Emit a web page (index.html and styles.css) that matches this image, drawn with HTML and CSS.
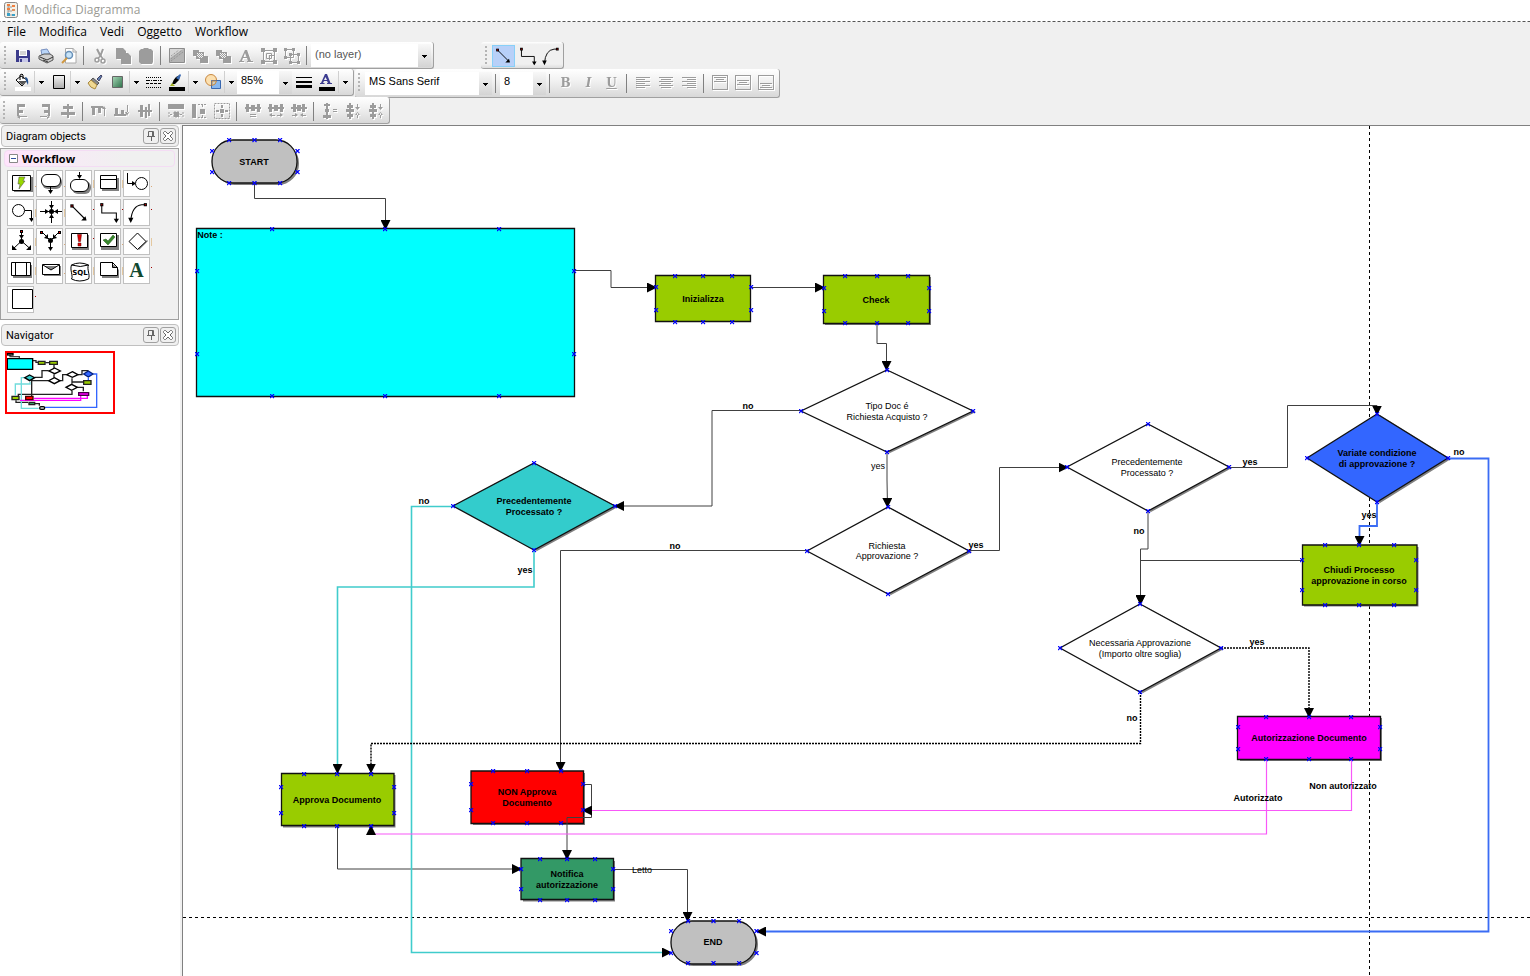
FILE: index.html
```html
<!DOCTYPE html>
<html lang="it">
<head>
<meta charset="utf-8">
<title>Modifica Diagramma</title>
<link rel="stylesheet" href="styles.css">
</head>
<body>
<svg class="defs" aria-hidden="true">
  <defs>
    <symbol id="i-caret" viewBox="0 0 5 3"><path d="M0 0h5v1h-1v1h-1v1h-1v-1h-1v-1h-1z"/></symbol>
    <symbol id="i-scissors" viewBox="0 0 16 16"><path d="M5 1l3.500 7M11 1L8 9" stroke="#9c9c9c" stroke-width="2" fill="none"/><circle cx="5" cy="12" r="2" fill="none" stroke="#9c9c9c" stroke-width="1.500"/><circle cx="11" cy="13" r="2" fill="none" stroke="#9c9c9c" stroke-width="1.500"/><path d="M6 10l3-2 2 3" stroke="#9c9c9c" stroke-width="1.500" fill="none"/></symbol>
    <symbol id="i-copy" viewBox="0 0 16 16"><path d="M1 0h7l3 3v2h2l3 3v8H6v-5H1z" fill="#9c9c9c"/></symbol>
    <symbol id="i-paste" viewBox="0 0 16 16"><path d="M3 1h2l1-1h4l1 1h2l2 2v11l-1 2H3l-2-2V3z" fill="#9c9c9c"/></symbol>
    <symbol id="i-back" viewBox="0 0 16 16"><path d="M1 2h6v2h5v4h4v7H8v-4H4V8H1z" fill="#9c9c9c"/><path d="M5 5h1v1H5zM7 5h1v1H7zM9 5h1v1H9zM6 6h1v1H6zM8 6h1v1H8zM10 6h1v1h-1zM5 7h1v1H5zM7 7h1v1H7zM9 7h1v1H9zM6 8h1v1H6zM8 8h1v1H8zM7 9h1v1H7zM9 9h1v1H9zM10 8h1v1h-1z" fill="#f4f4f4"/></symbol>
    <symbol id="i-pal-line" viewBox="0 0 24 24"><path d="M5 5L18 18" stroke="#000" fill="none"/><path d="M19 19h-5l4-4z"/><path d="M4 4h3v3H4z"/><path d="M5 5h1v1H5z" fill="red"/></symbol>
    <symbol id="i-pal-elbow" viewBox="0 0 24 24"><path d="M6.500 5v7.500h14V21" stroke="#000" fill="none"/><path d="M18 18h5l-2.500 4z"/><path d="M5 3h3v3H5z"/><path d="M6 4h1v1H6z" fill="red"/></symbol>
    <symbol id="i-pal-arc" viewBox="0 0 24 24"><path d="M20 4.500h-3Q7.500 5.500 6.500 20" stroke="#000" fill="none"/><path d="M4 17h5l-2.500 5z"/><path d="M19 3h3v3h-3z"/><path d="M20 4h1v1h-1z" fill="red"/></symbol>
    <marker id="pt" markerWidth="5" markerHeight="5" refX="2.500" refY="2.500" markerUnits="userSpaceOnUse"><path d="M.5.5l4 4M4.500.5l-4 4" stroke="#00f" stroke-width="1.200"/></marker>
    <marker id="arrow" markerWidth="10" markerHeight="10" refX="9" refY="5" orient="auto" markerUnits="userSpaceOnUse"><path d="M0 0l10 5-10 5z"/></marker>
  </defs>
</svg>

<header class="titlebar">
  <svg class="app-icon" viewBox="0 0 16 16"><rect x="1.500" y=".5" width="13" height="15" rx="2" fill="#f4f1e8" stroke="#888"/><path d="M5 3v10M5 5h4M5 9h4M5 13h4" stroke="#999" fill="none"/><path d="M4 2h3v2H4zM9 3h3v2H9zM4 6h3v2H4z" fill="#f08040"/><path d="M9 7h3v2H9z" fill="#e09060"/><path d="M4 11h3v3H4zM9 12h3v2H9z" fill="#3aa0c8"/></svg>
  <h1 class="title">Modifica Diagramma</h1>
</header>

<nav class="menubar">
  <button class="menu">File</button><button class="menu">Modifica</button><button class="menu">Vedi</button><button class="menu">Oggetto</button><button class="menu">Workflow</button>
</nav>

<div class="toolbars">
  <div class="row row-spaced">
    <div class="toolbar">
      <span class="grip"></span>
      <button class="tool" aria-label="Salva"><svg viewBox="0 0 16 16"><path d="M1 2h13l1 1v11H1z" fill="#3c3c8c"/><path d="M4 2h8v6H4z" fill="#fff"/><path d="M5 4h6M5 6h6" stroke="#aaa"/><path d="M4 10h9v4H4z" fill="#c8c8e8"/><path d="M5 11h2v3H5z" fill="#3c3c8c"/></svg></button>
      <button class="tool" aria-label="Stampa"><svg viewBox="0 0 16 16"><path d="M4 7L3 2l6-1 3 5z" fill="#b8d4f8" stroke="#7890c0"/><path d="M1 8l5-2h6l3 2v4l-6 3-8-4z" fill="#d0d0d0" stroke="#555"/><path d="M2 9l7 3 6-3M5 12l5 2" stroke="#333" fill="none"/></svg></button>
      <button class="tool" aria-label="Anteprima"><svg viewBox="0 0 16 16"><path d="M5 .5h7l3 3v11.500H4.500V.5z" fill="#fff" stroke="#aaa"/><path d="M12 0v4h4" fill="none" stroke="#aaa"/><circle cx="8" cy="7" r="3.500" fill="#c8e4f8" stroke="#6890b8" stroke-width="1.500"/><path d="M6 10l-5 5" stroke="#d09840" stroke-width="2"/></svg></button>
      <span class="sep"></span>
      <button class="tool off" aria-label="Taglia"><svg><use href="#i-scissors"/></svg></button>
      <button class="tool off" aria-label="Copia"><svg><use href="#i-copy"/></svg></button>
      <button class="tool off" aria-label="Incolla"><svg><use href="#i-paste"/></svg></button>
      <span class="sep"></span>
      <button class="tool off" aria-label="Immagine"><svg viewBox="0 0 16 16"><path d="M.5.5h15v14H.5z" fill="#b4b4b4" stroke="#8c8c8c"/><path d="M1 10L14 1H1z" fill="#d8d8d8"/><path d="M2 11L13 2M2 8l8-6M2 13L14 4" stroke="#8c8c8c" stroke-dasharray="1 1"/></svg></button>
      <button class="tool off" aria-label="Porta dietro"><svg><use href="#i-back"/></svg></button>
      <button class="tool off" aria-label="Porta davanti"><svg><use href="#i-back"/></svg></button>
      <button class="tool off" aria-label="Testo"><svg viewBox="0 0 16 16"><path d="M7 2h2l4 11h2v1H9v-1h1l-1-3H5l-1 3h2v1H1v-1h1zM7 5L5.500 9h3z" fill="#9c9c9c"/></svg></button>
      <button class="tool off" aria-label="Raggruppa"><svg viewBox="0 0 16 16"><path d="M2.500 2.500h11v11h-11zM5.500 5.500h5v5h-5z" fill="none" stroke="#9c9c9c"/><path d="M0 0h4v4H0zM12 0h4v4h-4zM0 12h4v4H0zM12 12h4v4h-4zM8 7h5v1H8zM8 8h1v4H8z" fill="#9c9c9c"/></svg></button>
      <button class="tool off" aria-label="Separa"><svg viewBox="0 0 16 16"><path d="M1.500 1.500h8v8h-8zM6.500 6.500h8v8h-8z" fill="none" stroke="#9c9c9c"/><path d="M0 0h3v3H0zM8 0h3v3H8zM0 8h3v3H0zM5 5h3v3H5zM13 5h3v3h-3zM5 13h3v3H5zM13 13h3v3h-3z" fill="#9c9c9c"/></svg></button>
      <span class="sep"></span>
      <span class="combo combo-layer"><select aria-label="Livello"><option>(no layer)</option></select><svg class="caret"><use href="#i-caret"/></svg></span>
    </div>
    <div class="toolbar toolbar-flat">
      <span class="grip"></span>
      <button class="tool on" aria-label="Linea"><svg class="big"><use href="#i-pal-line"/></svg></button>
      <button class="tool" aria-label="Linea spezzata"><svg class="big"><use href="#i-pal-elbow"/></svg></button>
      <button class="tool" aria-label="Curva"><svg class="big"><use href="#i-pal-arc"/></svg></button>
    </div>
  </div>

  <div class="row row-format">
    <div class="toolbar">
      <span class="grip"></span>
      <button class="tool" aria-label="Riempimento"><svg viewBox="0 0 16 16"><path d="M0 13h16v4H0z" fill="#fff"/><path d="M1 6l5-4 6 4-5 6z" fill="#fff" stroke="#000"/><path d="M3 7h8l-4 4z" fill="#555"/><path d="M5 6V1l2-1 1 1v4" stroke="#000" fill="none"/><path d="M10 3q4 0 3 8l-2-4z" fill="#24508c"/></svg></button>
      <button class="drop" aria-label="Opzioni riempimento"><svg class="caret"><use href="#i-caret"/></svg></button>
      <button class="tool" aria-label="Sfumatura"><svg viewBox="0 0 16 16"><linearGradient id="g1" x2="0" y2="1"><stop stop-color="#f4f4f4"/><stop offset="1" stop-color="#aaa"/></linearGradient><path d="M2.500 1.500h11v13h-11z" fill="url(#g1)" stroke="#000"/></svg></button>
      <button class="drop" aria-label="Opzioni sfumatura"><svg class="caret"><use href="#i-caret"/></svg></button>
      <button class="tool" aria-label="Copia formato"><svg viewBox="0 0 16 16"><path d="M10 5l4-4 1 1-3 5z" fill="#6080b0" stroke="#446"/><path d="M6 4l6 5-2 2-6-5z" fill="#888" stroke="#555"/><path d="M4 6l6 5-2 4q-5-1-7-6z" fill="#f0d890" stroke="#a88840"/></svg></button>
      <button class="tool" aria-label="Ombra"><svg viewBox="0 0 16 16"><linearGradient id="g2" x2="1" y2="1"><stop stop-color="#a8d8b8"/><stop offset="1" stop-color="#2c7048"/></linearGradient><path d="M2.500 2.500h10v11h-10z" fill="url(#g2)" stroke="#666"/></svg></button>
      <button class="drop" aria-label="Opzioni ombra"><svg class="caret"><use href="#i-caret"/></svg></button>
      <button class="tool" aria-label="Stile linea"><svg viewBox="0 0 16 16" class="crisp"><path d="M0 3.500h16M0 13.500h16" stroke="#000" stroke-dasharray="1 1"/><path d="M0 6.500h16" stroke="#000" stroke-dasharray="4 1 1 1"/><path d="M0 9.500h16" stroke="#000" stroke-dasharray="3 1"/></svg></button>
      <button class="tool" aria-label="Colore linea"><svg viewBox="0 0 16 16"><path d="M0 13h16v4H0z"/><path d="M3 10q1-4 4-7l4-2-1 5-4 4z" fill="#000"/><path d="M7 4l4-4 1 1-2 5z" fill="#3868b0"/><path d="M1 12h5l-3-3z" fill="#a0b020"/></svg></button>
      <button class="drop" aria-label="Opzioni linea"><svg class="caret"><use href="#i-caret"/></svg></button>
      <button class="tool" aria-label="Forme"><svg viewBox="0 0 16 16"><circle cx="6" cy="6" r="5.500" fill="#fce0b0" stroke="#c88840"/><path d="M6.500 6.500h9v8h-9z" fill="#88b8f0" stroke="#3868b0"/><path d="M7 7h4.500a5.500 5.500 0 0 1-4.500 4.500z" fill="#c8d0c8" stroke="#c88840"/></svg></button>
      <button class="drop" aria-label="Opzioni forme"><svg class="caret"><use href="#i-caret"/></svg></button>
      <span class="combo combo-zoom"><select aria-label="Zoom"><option>85%</option></select><svg class="caret"><use href="#i-caret"/></svg></span>
      <button class="tool" aria-label="Spessore"><svg viewBox="0 0 16 16"><path d="M0 3h16v1H0zM0 7h16v2H0zM0 11h16v3H0z"/></svg></button>
      <button class="tool" aria-label="Colore testo"><svg viewBox="0 0 16 16"><path d="M6 0h2l3.500 9H13v1H8V9h1L8 7H5L4 9h1.500v1H1V9h1zM6.500 3L5 6h3z" fill="#3c3c90"/><path d="M0 13h16v4H0z"/></svg></button>
      <button class="drop" aria-label="Opzioni testo"><svg class="caret"><use href="#i-caret"/></svg></button>
    </div>
    <div class="toolbar toolbar-tall">
      <span class="grip"></span>
      <span class="combo combo-font"><select aria-label="Carattere"><option>MS Sans Serif</option></select><svg class="caret"><use href="#i-caret"/></svg></span>
      <span class="sep"></span>
      <span class="combo combo-size"><select aria-label="Dimensione"><option>8</option></select><svg class="caret"><use href="#i-caret"/></svg></span>
      <span class="sep"></span>
      <button class="tool off glyph bold">B</button>
      <button class="tool off glyph italic">I</button>
      <button class="tool off glyph underline">U</button>
      <span class="sep"></span>
      <button class="tool off" aria-label="Allinea a sinistra"><svg viewBox="0 0 16 16" class="crisp"><path d="M1 2.500h14M1 4.500h9M1 6.500h14M1 8.500h9M1 10.500h14M1 12.500h9" stroke="#9c9c9c"/></svg></button>
      <button class="tool off" aria-label="Centra"><svg viewBox="0 0 16 16" class="crisp"><path d="M1 2.500h14M3 4.500h10M1 6.500h14M3 8.500h10M1 10.500h14M3 12.500h10" stroke="#9c9c9c"/></svg></button>
      <button class="tool off" aria-label="Allinea a destra"><svg viewBox="0 0 16 16" class="crisp"><path d="M1 2.500h14M6 4.500h9M1 6.500h14M6 8.500h9M1 10.500h14M6 12.500h9" stroke="#9c9c9c"/></svg></button>
      <span class="sep"></span>
      <button class="tool off" aria-label="In alto"><svg viewBox="0 0 16 16" class="crisp"><path d="M.5.5h15v14H.5zM2 2.500h12M4 4.500h8M2 6.500h12" stroke="#9c9c9c" fill="none"/></svg></button>
      <button class="tool off" aria-label="In mezzo"><svg viewBox="0 0 16 16" class="crisp"><path d="M.5.5h15v14H.5zM2 5.500h12M4 7.500h8M2 9.500h12" stroke="#9c9c9c" fill="none"/></svg></button>
      <button class="tool off" aria-label="In basso"><svg viewBox="0 0 16 16" class="crisp"><path d="M.5.5h15v14H.5zM2 8.500h12M4 10.500h8M2 12.500h12" stroke="#9c9c9c" fill="none"/></svg></button>
    </div>
  </div>

  <div class="row row-align">
    <div class="toolbar">
      <span class="grip"></span>
      <button class="tool off" aria-label="Allinea bordi sinistri"><svg viewBox="0 0 16 16"><path d="M3 1h2v12H3zM5 1h6v3H5zM5 7h4v3H5zM5 13h8v1H5zM3 14l3-2v4z" fill="#9c9c9c"/></svg></button>
      <button class="tool off" aria-label="Allinea bordi destri"><svg viewBox="0 0 16 16"><path d="M11 1h2v12h-2zM5 1h6v3H5zM7 7h4v3H7zM3 13h8v1H3zM13 14l-3-2v4z" fill="#9c9c9c"/></svg></button>
      <button class="tool off" aria-label="Centra in orizzontale"><svg viewBox="0 0 16 16"><path d="M7 1h2v14H7zM3 3h10v3H3zM1 9h14v3H1z" fill="#9c9c9c"/></svg></button>
      <span class="sep"></span>
      <button class="tool off" aria-label="Allinea bordi superiori"><svg viewBox="0 0 16 16"><path d="M0 3h12v2H0zM1 5h3v7H1zM7 5h3v5H7zM13 5h1v8h-1zM13 3l2 3h-4z" fill="#9c9c9c"/></svg></button>
      <button class="tool off" aria-label="Allinea bordi inferiori"><svg viewBox="0 0 16 16"><path d="M0 11h12v2H0zM1 5h3v6H1zM7 7h3v4H7zM13 2h1v8h-1zM13 13l2-4h-4z" fill="#9c9c9c"/></svg></button>
      <button class="tool off" aria-label="Centra in verticale"><svg viewBox="0 0 16 16"><path d="M1 7h14v2H1zM3 2h3v12H3zM8 4h2v11H8zM11 1h2v12h-2z" fill="#9c9c9c"/></svg></button>
      <span class="sep"></span>
      <button class="tool off" aria-label="Stessa larghezza"><svg viewBox="0 0 16 16"><path d="M0 1h16v5H0z" fill="#9c9c9c"/><path d="M6 9h5v5H6zM1 9v5M15 9v5M2 11.500h3M12 11.500h3" fill="#9c9c9c" stroke="#9c9c9c" stroke-dasharray="2 1"/></svg></button>
      <button class="tool off" aria-label="Stessa altezza"><svg viewBox="0 0 16 16"><path d="M1 1h4v14H1zM9 6h5v5H9z" fill="#9c9c9c"/><path d="M7 1.500h9M7 14.500h9M11.500 2v3M11.500 12v3" stroke="#9c9c9c" stroke-dasharray="2 1"/></svg></button>
      <button class="tool off" aria-label="Stessa dimensione"><svg viewBox="0 0 16 16"><path d="M.5.5h15v15H.5z" fill="none" stroke="#9c9c9c" stroke-dasharray="2 1"/><path d="M6 6h4v4H6zM7 2h2v3H7zM7 11h2v3H7zM2 7h3v2H2zM11 7h3v2h-3z" fill="#9c9c9c"/></svg></button>
      <span class="sep"></span>
      <button class="tool off" aria-label="Spaziatura orizzontale uguale"><svg viewBox="0 0 16 16"><path d="M0 4h16v2H0zM1 1h3v8H1zM6 2h4v6H6zM12 1h3v8h-3zM5 11h6v1H5zM5 13h6v1H5z" fill="#9c9c9c"/></svg></button>
      <button class="tool off" aria-label="Aumenta spazio orizzontale"><svg viewBox="0 0 16 16"><path d="M0 4h16v2H0zM1 1h3v8H1zM6 2h4v6H6zM12 1h3v8h-3zM1 12l3-2v4zM15 12l-3-2v4zM4 12h3v1H4zM9 12h3v1H9z" fill="#9c9c9c"/></svg></button>
      <button class="tool off" aria-label="Riduci spazio orizzontale"><svg viewBox="0 0 16 16"><path d="M0 4h16v2H0zM2 1h3v8H2zM6 2h4v6H6zM11 1h3v8h-3zM7 12l-3-2v4zM9 12l3-2v4zM1 12h3v1H1zM12 12h3v1h-3z" fill="#9c9c9c"/></svg></button>
      <span class="sep"></span>
      <button class="tool off" aria-label="Spaziatura verticale uguale"><svg viewBox="0 0 16 16"><path d="M4 0h2v16H4zM2 1h6v2H2zM3 6h4v3H3zM1 12h8v3H1zM11 6h4v1h-4zM11 8h4v1h-4z" fill="#9c9c9c"/></svg></button>
      <button class="tool off" aria-label="Aumenta spazio verticale"><svg viewBox="0 0 16 16"><path d="M4 0h2v16H4zM2 2h6v3H2zM1 6h8v3H1zM2 11h6v3H2zM12 1h1v5h-1zM12 10h1v5h-1zM10 4h5l-2.500 3zM10 12h5l-2.500-3z" fill="#9c9c9c"/></svg></button>
      <button class="tool off" aria-label="Riduci spazio verticale"><svg viewBox="0 0 16 16"><path d="M4 0h2v16H4zM2 2h6v3H2zM1 6h8v3H1zM2 11h6v3H2zM12 1h1v5h-1zM12 10h1v5h-1zM10 4h5l-2.500 3zM10 12h5l-2.500-3z" fill="#9c9c9c"/></svg></button>
    </div>
  </div>
</div>

<div class="workspace">
  <aside class="sidebar">
    <section>
      <div class="panel-head">
        <h2>Diagram objects</h2>
        <button class="pin" aria-label="Blocca"><svg viewBox="0 0 12 12"><path d="M3.500 1.500h5v5h-5zM2 6.500h8M6.500 7v4M7.500 2v4" fill="none" stroke="#666"/></svg></button>
        <button class="pin" aria-label="Chiudi"><svg viewBox="0 0 12 12"><path d="M1.500 2.500l1-1h1L6 4l2.500-2.500h1l1 1v1L8 6l2.500 2.500v1l-1 1h-1L6 8l-2.500 2.500h-1l-1-1v-1L4 6 1.500 3.500z" fill="#fff" stroke="#666"/></svg></button>
      </div>
      <div class="panel-body">
        <button class="group"><svg viewBox="0 0 9 9"><path d="M.5.5h8v8h-8z" fill="#fff" stroke="#888"/><path d="M2 4.500h5" stroke="#3050a0"/></svg>Workflow</button>
        <div class="palette">
          <button class="shape dot" aria-label="Azione"><svg viewBox="0 0 25 25"><path d="M6 6h19v15H6z" fill="#808080"/><path d="M4.500 4.500h18v15h-18z" fill="#fff" stroke="#000"/><path d="M11 6h6l-2 4h2l-6 8 1-5h-2z" fill="#98d800" stroke="#444" stroke-width=".5"/></svg></button>
          <button class="shape dot" aria-label="Inizio"><svg viewBox="0 0 25 25"><rect x="5" y="5" width="20" height="13" rx="6" fill="#808080"/><rect x="4.500" y="3.500" width="19" height="12" rx="5.500" fill="#fff" stroke="#000"/><path d="M13.500 16v5" stroke="#000"/><path d="M11 19h5l-2.500 4z"/></svg></button>
          <button class="shape bar" aria-label="Fine"><svg viewBox="0 0 25 25"><rect x="6" y="10" width="19" height="13" rx="6" fill="#808080"/><rect x="4.500" y="8.500" width="18" height="12" rx="5.500" fill="#fff" stroke="#000"/><path d="M13.500 1v4" stroke="#000"/><path d="M11 4h5l-2.500 4z"/></svg></button>
          <button class="shape bar" aria-label="Sottoprocesso"><svg viewBox="0 0 25 25"><path d="M7 7h17v13H7z" fill="#808080"/><path d="M5.500 4.500h16v13h-16zM5 8.500h16" fill="#fff" stroke="#000"/></svg></button>
          <button class="shape dot" aria-label="Ingresso"><svg viewBox="0 0 25 25"><path d="M3.500 2v10.500h6" fill="none" stroke="#000"/><path d="M8 10l4 2.500L8 15z"/><circle cx="17.500" cy="12.500" r="6" fill="#fff" stroke="#000"/></svg></button>

          <button class="shape bar" aria-label="Uscita"><svg viewBox="0 0 25 25"><circle cx="10.500" cy="10.500" r="6" fill="#fff" stroke="#000"/><path d="M17 10.500h6.500v9" fill="none" stroke="#000"/><path d="M21 18h5l-2.500 4z"/></svg></button>
          <button class="shape bar" aria-label="Sincronizza"><svg viewBox="0 0 25 25"><path d="M14.500 1v22M3 11.500h22" stroke="#000"/><circle cx="14.500" cy="11.500" r="2.500"/><path d="M12 5h5l-2.500 4zM12 18h5l-2.500-4zM8 9l4 2.500L8 14zM21 9l-4 2.500 4 2.500z"/></svg></button>
          <button class="shape reddot" aria-label="Linea"><svg viewBox="0 0 25 25"><use href="#i-pal-line" width="26" height="26"/></svg></button>
          <button class="shape reddot" aria-label="Linea spezzata"><svg viewBox="0 0 25 25"><use href="#i-pal-elbow" width="25" height="25"/></svg></button>
          <button class="shape reddot" aria-label="Curva"><svg viewBox="0 0 25 25"><use href="#i-pal-arc" width="25" height="25"/></svg></button>

          <button class="shape bar" aria-label="Divisione"><svg viewBox="0 0 25 25"><path d="M13.500 2v10L5 20M13.500 12l9 8" fill="none" stroke="#000"/><circle cx="13.500" cy="12.500" r="2.500"/><path d="M11 6h5l-2.500 4zM4 21v-5l5 5zM23 21v-5l-5 5zM12 1h3v3h-3z"/><path d="M13 2h1v1h-1z" fill="red"/></svg></button>
          <button class="shape dot" aria-label="Unione"><svg viewBox="0 0 25 25"><path d="M5 3l8.500 8.500L22 3M13.500 12v8" fill="none" stroke="#000"/><circle cx="13.500" cy="11.500" r="2.500"/><path d="M11 18h5l-2.500 4zM11 10V5l-4 4zM16 10V5l4 4zM3 2h3v3H3zM21 2h3v3h-3z"/><path d="M4 3h1v1H4zM22 3h1v1h-1z" fill="red"/></svg></button>
          <button class="shape reddot" aria-label="Avviso"><svg viewBox="0 0 25 25"><path d="M6 6h17v15H6z" fill="#808080"/><path d="M5.500 4.500h16v14h-16z" fill="#fff" stroke="#000"/><path d="M11.500 5.500h4l-1 7h-2zM12 14h3v3h-3z" fill="#e00000" stroke="#500" stroke-width=".5"/></svg></button>
          <button class="shape dot" aria-label="Verifica"><svg viewBox="0 0 25 25"><path d="M6 6h18v15H6z" fill="#808080"/><path d="M5.500 4.500h16v13h-16z" fill="#fff" stroke="#000"/><path d="M8 11l3-1 2 2 5-6 2 2-7 8z" fill="#38882c" stroke="#205018" stroke-width=".5"/></svg></button>
          <button class="shape bar" aria-label="Decisione"><svg viewBox="0 0 25 25"><path d="M15 21l9-9-1-1-9 9z" fill="#808080"/><path d="M13.500 4l8.500 8.500-8.500 8-8.500-8z" fill="#fff" stroke="#000"/></svg></button>

          <button class="shape bar" aria-label="Procedura"><svg viewBox="0 0 25 25"><path d="M5 7h19v13H5z" fill="#808080"/><path d="M3.500 4.500h19v13h-19zM7.500 5v13M18.500 5v13" fill="#fff" stroke="#000"/></svg></button>
          <button class="shape dot" aria-label="Posta"><svg viewBox="0 0 25 25"><path d="M7 8h17v10H7z" fill="#808080"/><path d="M5.500 6.500h17v10h-17zM6 7l8 5 8-5" fill="#fff" stroke="#000"/></svg></button>
          <button class="shape bar" aria-label="SQL"><svg viewBox="0 0 25 25"><path d="M5.500 7c-2 5 2 11 0 14q8 4 17 0c2-4-2-10 0-14q-8 3-17 0q8-4 17 0" fill="#fff" stroke="#000"/><text x="14" y="17" class="sql">SQL</text></svg></button>
          <button class="shape bar" aria-label="Nota"><svg viewBox="0 0 25 25"><path d="M7 7h12l5 5v8H7z" fill="#808080"/><path d="M5.500 4.500h12l5 5v8h-17zM17.500 4v5.500h5" fill="#fff" stroke="#000"/></svg></button>
          <button class="shape reddot letter" aria-label="Testo">A</button>
          <button class="shape reddot" aria-label="Riquadro"><svg viewBox="0 0 25 25"><path d="M4.500 2.500h20v19h-20z" fill="#fff" stroke="#000"/></svg></button>
        </div>
      </div>
    </section>
    <section>
      <div class="panel-head">
        <h2>Navigator</h2>
        <button class="pin" aria-label="Blocca"><svg viewBox="0 0 12 12"><path d="M3.500 1.500h5v5h-5zM2 6.500h8M6.500 7v4M7.500 2v4" fill="none" stroke="#666"/></svg></button>
        <button class="pin" aria-label="Chiudi"><svg viewBox="0 0 12 12"><path d="M1.500 2.500l1-1h1L6 4l2.500-2.500h1l1 1v1L8 6l2.500 2.500v1l-1 1h-1L6 8l-2.500 2.500h-1l-1-1v-1L4 6 1.500 3.500z" fill="#fff" stroke="#666"/></svg></button>
      </div>
      <svg class="navigator" viewBox="21 102 318 177" fill="none" stroke-width="4">
        <path d="M30 108v5h28v6" stroke="#444"/><rect x="22" y="103" width="17" height="5" fill="#aaa" stroke="#000"/>
        <path d="M98 125h10v5h10M136 131h12M162 138v10M146 155h-20v20h-22M162 166v10M146 185H95v46M180 185h8v-18h12M216 178v16M234 167h12v-12h17v6M250 189h-34M232 205h18v12M216 216v10H55v6M48 244v6h36M98 254h20v6" stroke="#222"/>
        <path d="M74 176H64v92h52M90 188v7H46v34" stroke="#70dcdc"/>
        <path d="M280 165h10v100H134M265 176v8" stroke="#3366ff"/>
        <path d="M262 230v8H102M242 230v14H60" stroke="#f0f"/>
        <path d="M22 119h76v32H22z" fill="#0ff" stroke="#000"/>
        <path d="M115 127h20v9h-20zM149 127h23v9h-23zM251 185h22v11h-22zM36 232h21v10H36z" fill="#9c0" stroke="#222"/>
        <path d="M164 147l17 9-17 8-17-8zM163 176l17 9-17 9-17-9zM217 158l17 9-17 8-17-8zM215 196l17 9-17 9-17-9z" fill="#fff" stroke="#000"/>
        <path d="M89 168l15 8-15 9-15-9z" fill="#3cc" stroke="#000"/><path d="M265 156l14 9-14 9-14-9z" fill="#36f" stroke="#002080"/>
        <path d="M77 232h22v10H77z" fill="red" stroke="#400"/><path d="M236 221h30v8h-30z" fill="#f0f" stroke="#404"/><path d="M87 250h17v7H87z" fill="#396" stroke="#222"/><rect x="119" y="263" width="15" height="8" rx="4" fill="#ccc" stroke="#000"/>
      </svg>
    </section>
  </aside>

  <main class="canvas">
    <svg class="diagram">
      <g transform="translate(-183 -126)">
        <g class="guides"><path d="M1369.500 126V1600M183 917.500H3000"/></g>
        <g class="shadows">
          <rect x="214" y="142" width="85" height="43" rx="21"/><rect x="673" y="923" width="85" height="43" rx="21"/>
          <path d="M825 277h106v48H825zM1304 547h114.500v59.500H1304zM1240 718h142v43h-142zM283 775h112.500v52.500H283zM473 773h112v52H473zM523 861h92v40.500h-92z"/>
          <path d="M890 371l86 41-86 41-86-41zM891 508l81 44-81 43-81-43zM537 464l81 43-81 44-81-44zM1151 425l81 43-81 44-81-44zM1380 415l71 44-71 44-70-44zM1143 605l81 44-81 44-80-44z"/>
        </g>
        <g class="shapes">
          <rect x="212" y="140" width="85" height="43" rx="21" fill="#c0c0c0"/>
          <rect x="671" y="921" width="85" height="43" rx="21" fill="#c0c0c0"/>
          <path d="M196.500 228.500h378v168h-378z" fill="#0ff"/>
          <path d="M655.500 275.500h95v46h-95zM823.500 275.500h106v48h-106zM1302.500 545h114.500v60h-114.500zM281.500 773.500h112.500v52h-112.500z" fill="#9c0"/>
          <path d="M887 370l86 41-86 41-86-41zM888 507l81 44-81 43-81-43zM1148 424l81 43-81 44-81-44zM1140 604l81 44-81 44-80-44z" fill="#fff"/>
          <path d="M534 463l81 43-81 44-81-44z" fill="#3cc"/>
          <path d="M1377 414l71 44-71 44-70-44z" fill="#36f"/>
          <path d="M1237.500 716.500h143v43h-143z" fill="#f0f"/>
          <path d="M471 771h112.500v52.500H471z" fill="red"/>
          <path d="M521 858.500h92.500v41H521z" fill="#396"/>
        </g>
        <g class="links">
          <path d="M254.500 183v15.500h131V229"/>
          <path d="M574 270.500h37v17h45"/>
          <path d="M751 287.500h73"/>
          <path d="M877 324v19.500h9.500V370"/>
          <path d="M801 410.500h-89v95.500H615"/>
          <path d="M887 452v28l.5 27"/>
          <path d="M969 550.500h30.500v-83h68"/>
          <path d="M807 550.500H560.500V771"/>
          <path d="M1229 467.500h58.500v-62h89.500v9"/>
          <path d="M1148 511v38h-7.500v55"/>
          <path d="M1302 560.500h-161.500V604"/>
          <path d="M337.500 826v43H521"/>
          <path d="M584 784.500h7.500v33H567V859"/>
          <path d="M614 869.500h73.500V921"/>
          <path class="link-teal" d="M453 506.500h-41.500v446H671"/>
          <path class="link-teal" d="M534 550v37H337.500v186"/>
          <path class="link-blue" d="M1448 458.500h40.500v473H757"/>
          <path class="link-blue" d="M1377 502v24h-17.500v19"/>
          <path class="link-pink" d="M1351.500 759v51.500H583"/>
          <path class="link-pink" d="M1266.500 759v75H371v-8"/>
          <path class="link-dotted" d="M1221 648h88v69"/>
          <path class="link-dotted" d="M1140.500 692v51.500H371v29"/>
        </g>
        <g class="ports">
          <path d="M229 140h25.500h25.500l17.500 11v21l-17.500 11h-25.500h-25.500l-17-11v-21"/>
          <path d="M688 921h25.500h25.500l17.500 10v22l-17.500 10h-25.500h-25.500l-17-10v-22"/>
          <path d="M272 229h113h114l75 42v83l-75 42h-114h-113l-75-42v-83"/>
          <path d="M675 276h28h29l19 11v23l-19 12h-29h-28l-19-12v-23"/>
          <path d="M845 276h32h31l21 12v23l-21 12h-31h-32l-21-12v-23"/>
          <path d="M1325 545h34h35l22 15v30l-22 15h-35h-34l-23-15v-30"/>
          <path d="M1266 717h43h42l29 10v22l-29 10h-42h-43l-28-10v-22"/>
          <path d="M304 774h33h34l23 13v26l-23 13h-34h-33l-23-13v-26"/>
          <path d="M493 771h34h34l22 13v26l-22 13h-34h-34l-22-13v-26"/>
          <path d="M540 859h27h28l18 10v20l-18 11h-28h-27l-19-11v-20"/>
          <path d="M887 370l86 41-86 41-86-41"/><path d="M888 507l81 44-81 43-81-43"/><path d="M1148 424l81 43-81 44-81-44"/><path d="M1140 604l81 44-81 44-80-44"/><path d="M534 463l81 43-81 44-81-44"/><path d="M1377 414l71 44-71 44-70-44"/>
        </g>
        <g class="labels labels-bold">
          <text x="254" y="165">START</text><text x="713" y="945">END</text>
          <text x="210" y="238">Note :</text>
          <text x="703" y="302">Inizializza</text><text x="876" y="303">Check</text>
          <text x="534" y="504">Precedentemente<tspan x="534" dy="11">Processato ?</tspan></text>
          <text x="1377" y="456">Variate condizione<tspan x="1377" dy="11">di approvazione ?</tspan></text>
          <text x="1359" y="573">Chiudi Processo<tspan x="1359" dy="11">approvazione in corso</tspan></text>
          <text x="1309" y="741">Autorizzazione Documento</text>
          <text x="337" y="803">Approva Documento</text>
          <text x="527" y="795">NON Approva<tspan x="527" dy="11">Documento</tspan></text>
          <text x="567" y="877">Notifica<tspan x="567" dy="11">autorizzazione</tspan></text>
          <text x="748" y="409">no</text><text x="424" y="504">no</text><text x="675" y="549">no</text><text x="1139" y="534">no</text><text x="1132" y="721">no</text><text x="1459" y="455">no</text>
          <text x="525" y="573">yes</text><text x="976" y="548">yes</text><text x="1250" y="465">yes</text><text x="1369" y="518">yes</text><text x="1257" y="645">yes</text>
          <text x="1258" y="801">Autorizzato</text><text x="1343" y="789">Non autorizzato</text>
        </g>
        <g class="labels">
          <text x="887" y="409">Tipo Doc é<tspan x="887" dy="11">Richiesta Acquisto ?</tspan></text>
          <text x="887" y="549">Richiesta<tspan x="887" dy="10">Approvazione ?</tspan></text>
          <text x="1147" y="465">Precedentemente<tspan x="1147" dy="11">Processato ?</tspan></text>
          <text x="1140" y="646">Necessaria Approvazione<tspan x="1140" dy="11">(Importo oltre soglia)</tspan></text>
          <text x="878" y="469">yes</text><text x="642" y="873">Letto</text>
        </g>
      </g>
    </svg>
  </main>
</div>
</body>
</html>
```
FILE: styles.css
```css
* { box-sizing: border-box; }

body {
  margin: 0;
  height: 100vh;
  display: flex;
  flex-direction: column;
  overflow: hidden;
  background: #f0f0f0;
  color: #000;
  font-family: "Open Sans", "Noto Sans", sans-serif;
  font-size: 12px;
}

button {
  margin: 0;
  padding: 0;
  border: 0;
  background: none;
  color: inherit;
  font: inherit;
}

.defs { position: absolute; width: 0; height: 0; }
.crisp { shape-rendering: crispEdges; }

.titlebar {
  display: flex;
  align-items: center;
  gap: 5px;
  height: 22px;
  padding: 0 3px 3px;
  background: #fff linear-gradient(90deg, #555 60%, #fff 60%) bottom / 5px 1px repeat-x;
}
.app-icon { width: 16px; height: 16px; }
.title { margin: 0; font-size: 12px; font-weight: 400; color: #9a9a94; }

.menubar { display: flex; gap: 1px; height: 20px; padding-left: 1px; }
.menu { padding: 0 6px 2px; }

.toolbars { height: 83px; }
.row { display: flex; align-items: flex-start; height: 27px; }
.row-spaced { gap: 47px; }
.row-format { height: 28px; gap: 1px; }

.toolbar {
  display: flex;
  align-items: center;
  height: 27px;
  padding: 1px 2px 0 4px;
  border-right: 1px solid #a0a0a0;
  border-bottom: 1px solid #a0a0a0;
  border-radius: 3px;
  background: linear-gradient(#fff, #f2f2f2 40%, #d8d8d8);
}
.row-format .toolbar { padding-top: 0; }
.row-align .toolbar { padding-top: 2px; padding-left: 3px; }
.toolbar.toolbar-tall { height: 29px; padding-left: 3px; }
.toolbar-flat { background: linear-gradient(#fff, #f0f0f0 10%, #f0f0f0 85%, #ddd); }

.grip {
  width: 3px;
  height: 20px;
  margin-right: 4px;
  background: linear-gradient(#b4b4b4 50%, transparent 50%) 0 0 / 2px 4px repeat-y;
}
.tool {
  display: flex;
  align-items: center;
  justify-content: center;
  width: 23px;
  height: 22px;
  flex: none;
}
.tool svg { width: 16px; height: 16px; overflow: visible; }
.tool svg.big { width: 23px; height: 22px; }
.tool.on { background: #b8d0f8; border: 1px solid #88d0f8; }
.tool.off svg, .glyph { filter: drop-shadow(1px 1px 0 #fff); }
.glyph { color: #9c9c9c; font-family: "DejaVu Serif", serif; font-size: 12px; font-weight: 700; }
.italic { font-style: italic; }
.underline { text-decoration: underline; }

.drop {
  display: flex;
  align-items: center;
  justify-content: center;
  width: 13px;
  height: 22px;
  border-left: 1px solid #d0d0d0;
}
.caret { width: 5px; height: 3px; }

.sep { flex: none; width: 1px; height: 19px; margin: 0 4px 0 3px; background: #808080; }

.combo { position: relative; height: 23px; background: #fff; }
.combo select {
  display: block;
  width: 100%;
  height: 100%;
  padding: 0 14px 4px 4px;
  border: 0;
  border-radius: 0;
  appearance: none;
  background: linear-gradient(#f8f8f8, #d4d4d4) right / 13px 100% no-repeat #fff;
  color: #000;
  font: 11px "Liberation Sans", Arial, sans-serif;
}
.combo .caret { position: absolute; right: 4px; top: 11px; pointer-events: none; }
.combo-layer { width: 120px; }
.combo-layer select { color: #555; }
.combo-zoom { width: 55px; }
.combo-font { width: 127px; }
.combo-size { width: 46px; }

.workspace { display: flex; flex: 1; min-height: 0; }
.sidebar { width: 182px; flex: none; padding-right: 1px; background: #fff; border-right: 2px solid #f0f0f0; }

.panel-head {
  display: flex;
  align-items: center;
  gap: 1px;
  height: 22px;
  margin: 0 0 1px 1px;
  padding: 0 2px 0 4px;
  border: 1px solid #c0c0c0;
  border-radius: 4px;
  background: #f0f0f0;
}
.panel-head h2 { flex: 1; margin: 0; font-family: Roboto, sans-serif; font-size: 11px; font-weight: 400; }
.pin {
  display: flex;
  align-items: center;
  justify-content: center;
  width: 16px;
  height: 16px;
  border: 1px solid #a0a0a0;
  border-radius: 3px;
}
.pin svg { width: 12px; height: 12px; }

.panel-body { height: 172px; margin-bottom: 4px; padding: 1px 3px; border: 1px solid #a0a0a0; background: #f0f0f0; }
.group {
  display: flex;
  align-items: center;
  gap: 4px;
  width: 100%;
  height: 17px;
  padding: 0 4px;
  border: 1px solid #f4dcf4;
  border-radius: 4px;
  background: linear-gradient(90deg, #ffe4fc, #f0f0f0 70%);
  font-size: 11px;
  font-weight: 700;
}
.group svg { width: 9px; height: 9px; }

.palette { display: grid; grid-template-columns: repeat(5, 27px); gap: 2px; padding: 3px; }
.shape { position: relative; height: 27px; border: 1px solid #c0c0c0; background: #fff; }
.shape svg { display: block; width: 25px; height: 25px; }
.shape::after { content: ""; position: absolute; right: -3px; top: 15px; width: 1px; height: 1px; background: #d8a878; }
.shape.bar::after { top: 9px; height: 8px; background: #e4c8a0; }
.shape.reddot::after { top: 9px; background: #a00000; }
.letter { color: #104830; font: 700 20px "Liberation Serif", serif; }
.sql { font: 700 7px "DejaVu Sans", sans-serif; text-anchor: middle; }

.navigator { display: block; width: 110px; height: 63px; margin: 5px 0 0 5px; border: 2px solid #f00; background: #fff; }

.canvas { flex: 1; min-width: 0; border-top: 1px solid #808080; border-left: 1px solid #808080; background: #fff; }
.diagram { display: block; width: 100%; height: 100%; }

.guides path { fill: none; stroke: #000; stroke-dasharray: 3 3; }
.shadows { fill: #808080; }
.shapes { stroke: #111; stroke-width: 1.300; }
.links path { fill: none; stroke: #404040; marker-end: url(#arrow); }
.links .link-teal { stroke: #40cccc; stroke-width: 1.600; }
.links .link-blue { stroke: #3a6cf4; stroke-width: 1.800; }
.links .link-pink { stroke: #f858f8; stroke-width: 1.200; }
.links .link-dotted { stroke: #000; stroke-width: 1.400; stroke-dasharray: 2 1; }
.ports path { fill: none; marker: url(#pt); }
.labels { font: 9px "Liberation Sans", Arial, sans-serif; text-anchor: middle; }
.labels-bold { font-weight: 700; }
```
